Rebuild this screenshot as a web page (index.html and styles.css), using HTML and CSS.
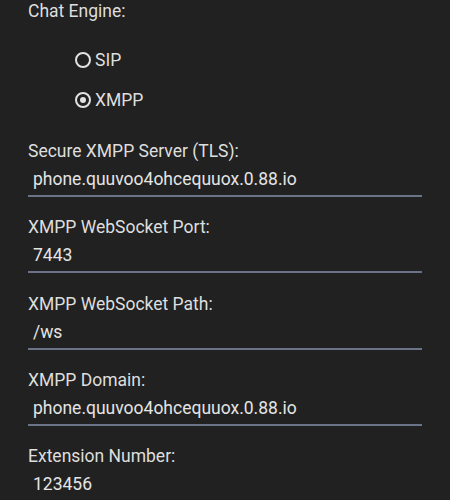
FILE: index.html
```html
<!DOCTYPE html>
<html lang="en">
<head>
  <meta charset="UTF-8" />
  <meta name="viewport" content="width=device-width, initial-scale=1.0"/>
  <title>Account Settings</title>
  <link rel="stylesheet" href="styles.css">
</head>
<body>
  <div class="settings">
    <div class="label title">Chat Engine:</div>
    <div class="radio-group">
      <label class="radio-row">
        <span class="radio"></span>
        <span>SIP</span>
      </label>
      <label class="radio-row">
        <span class="radio checked"></span>
        <span>XMPP</span>
      </label>
    </div>

    <div class="field">
      <div class="label">Secure XMPP Server (TLS):</div>
      <input class="text-input" type="text" value="phone.quuvoo4ohcequuox.0.88.io">
    </div>

    <div class="field">
      <div class="label">XMPP WebSocket Port:</div>
      <input class="text-input" type="text" value="7443">
    </div>

    <div class="field">
      <div class="label">XMPP WebSocket Path:</div>
      <input class="text-input" type="text" value="/ws">
    </div>

    <div class="field">
      <div class="label">XMPP Domain:</div>
      <input class="text-input" type="text" value="phone.quuvoo4ohcequuox.0.88.io">
    </div>

    <div class="field">
      <div class="label">Extension Number:</div>
      <input class="text-input" type="text" value="123456">
    </div>
  </div>
</body>
</html>
```

FILE: styles.css
```css
body {
  margin: 0;
  padding: 0;
  background: #212121;
  color: #dedede;
  font-family: Roboto, 'Noto Sans', sans-serif;
  font-size: 17.5px;
  overflow: hidden;
}

.settings {
  padding: 0 28px;
}

.label {
  line-height: 24px;
}

.title {
  margin-top: -1px;
}

.radio-group {
  margin-top: 17px;
  margin-bottom: 19px;
  padding-left: 47px;
}

.radio-row {
  display: flex;
  align-items: center;
  gap: 4px;
  height: 40px;
  line-height: 24px;
}

.radio {
  width: 16px;
  height: 16px;
  box-sizing: border-box;
  border: 2.5px solid #e2e2e2;
  border-radius: 50%;
  display: flex;
  align-items: center;
  justify-content: center;
}

.radio.checked::after {
  content: "";
  width: 6px;
  height: 6px;
  border-radius: 50%;
  background: #e2e2e2;
}

.field {
  margin-bottom: 18.3px;
}

.text-input {
  display: block;
  width: 100%;
  box-sizing: border-box;
  margin: 4px 0 0;
  padding: 0 5px 4px;
  height: 30px;
  line-height: 24px;
  background: transparent;
  border: none;
  border-bottom: 2px solid #6b7486;
  color: #e4e4e4;
  font-family: inherit;
  font-size: 17.5px;
  outline: none;
}
```
